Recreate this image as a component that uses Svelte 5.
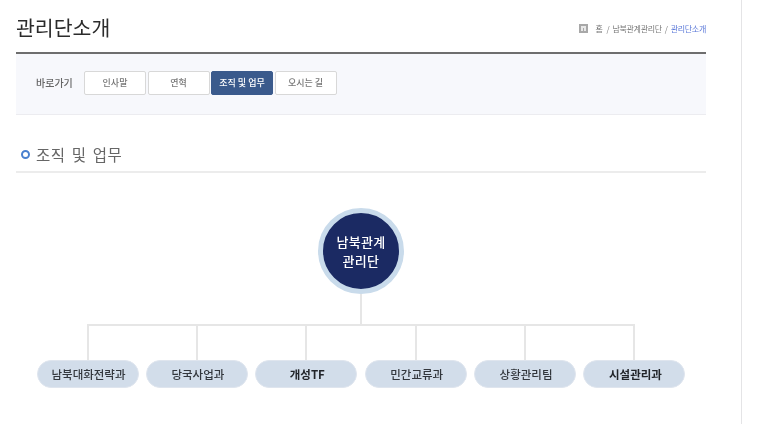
<script>
    const links = ["인사말", "연혁", "조직 및 업무", "오시는 길"];
    const teams = [
        { name: "남북대화전략과" },
        { name: "당국사업과" },
        { name: "개성TF", strong: true },
        { name: "민간교류과" },
        { name: "상황관리팀" },
        { name: "시설관리과", strong: true }
    ];
</script>

<div class="page">
    <main class="content">
        <header class="top">
            <h1>관리단소개</h1>
            <nav class="crumbs">
                <svg class="home" width="9" height="9" viewBox="0 0 9 9">
                    <rect width="9" height="9" fill="#a8a8a8" />
                    <rect x="2" y="2" width="5" height="5" fill="#e8e8e8" />
                    <rect x="4" y="4" width="1" height="3" fill="#a8a8a8" />
                </svg>
                <span class="crumb-home">홈</span>
                <span>/</span>
                <span>남북관계관리단</span>
                <span>/</span>
                <span class="here">관리단소개</span>
            </nav>
        </header>

        <div class="shortcuts">
            <span class="shortcuts-label">바로가기</span>
            <div class="tabs">
                {#each links as link, i}
                    <button class="tab" class:active={i === 2}>{link}</button>
                {/each}
            </div>
        </div>

        <h2 class="section"><span class="dot"></span>조직 및 업무</h2>

        <div class="chart">
            <div class="root"><span>남북관계<br />관리단</span></div>
            <div class="root-stem"></div>
            <div class="bar"></div>
            <div class="teams">
                {#each teams as team}
                    <div class="team">
                        <div class="stem"></div>
                        <div class="pill" class:strong={team.strong}>{team.name}</div>
                    </div>
                {/each}
            </div>
        </div>
    </main>
    <div class="edge"></div>
</div>

<style>
    :global(body) {
        margin: 0;
        background: #fff;
    }

    .page {
        display: flex;
        width: 768px;
        height: 424px;
        overflow: hidden;
        font-family: "Noto Sans CJK KR", "Noto Sans", sans-serif;
        filter: blur(0.3px);
    }

    .content {
        width: 690px;
        margin-left: 16px;
        flex: none;
    }

    .edge {
        width: 1px;
        margin-left: 35px;
        background: #e4e4e6;
        flex: none;
    }

    .top {
        display: flex;
        justify-content: space-between;
        align-items: center;
        height: 52px;
        border-bottom: 2px solid #6e6e6e;
    }

    h1 {
        margin: 2px 0 0;
        font-size: 20.5px;
        font-weight: 400;
        line-height: 28px;
        color: #2b2b2b;
    }

    .crumbs {
        display: flex;
        align-items: center;
        gap: 3px;
        margin-top: 4px;
        font-size: 8px;
        letter-spacing: -0.3px;
        color: #777;
    }

    .home { margin-right: 5px; }
    .crumb-home { margin-right: 1px; }
    .here { color: #5a78d8; }

    .shortcuts {
        display: flex;
        align-items: center;
        height: 61px;
        padding: 0 0 3px 20px;
        box-sizing: border-box;
        background: #f7f8fc;
        border-bottom: 1px solid #ececf0;
    }

    .shortcuts-label {
        width: 48px;
        font-size: 10px;
        font-weight: 500;
        color: #666;
    }

    .tabs {
        display: flex;
        gap: 1.5px;
    }

    .tab {
        width: 62px;
        height: 24px;
        padding: 0;
        background: #fff;
        border: 1px solid #d8d8d8;
        border-radius: 2px;
        font-family: inherit;
        font-size: 9px;
        font-weight: 500;
        color: #777;
    }

    .tab.active {
        background: #3a5a8c;
        border-color: #3a5a8c;
        color: #fff;
    }

    .section {
        display: flex;
        align-items: center;
        height: 58px;
        margin: 0;
        padding: 21px 0 0 5px;
        box-sizing: border-box;
        border-bottom: 2px solid #ececec;
        font-size: 15.5px;
        font-weight: 400;
        letter-spacing: 0.6px;
        word-spacing: 2px;
        color: #666;
    }

    .dot {
        width: 5px;
        height: 5px;
        margin: 1px 6px 0 0;
        border: 2px solid #4a80cf;
        border-radius: 50%;
    }

    .chart {
        display: flex;
        flex-direction: column;
        align-items: flex-start;
        padding-top: 35px;
    }

    .root {
        display: flex;
        align-items: center;
        justify-content: center;
        width: 76px;
        height: 76px;
        margin-left: 302px;
        background: #1b2a63;
        border: 5px solid #c9dbeb;
        border-radius: 50%;
        color: #fff;
        font-size: 13px;
        font-weight: 500;
        letter-spacing: 0.3px;
        line-height: 19px;
        text-align: center;
    }

    .root-stem {
        width: 2px;
        height: 30px;
        margin-left: 344px;
        background: #e6e6e6;
    }

    .bar {
        width: 548px;
        height: 2px;
        margin-left: 71px;
        background: #e6e6e6;
    }

    .teams {
        display: flex;
        gap: 7.4px;
        margin-left: 20.5px;
    }

    .team {
        display: flex;
        flex-direction: column;
        align-items: center;
        width: 102px;
    }

    .stem {
        width: 2px;
        height: 34px;
        background: #e6e6e6;
    }

    .pill {
        width: 100%;
        height: 28px;
        padding-left: 2px;
        box-sizing: border-box;
        background: #d2ddea;
        border: 1px solid #dfe5ee;
        border-radius: 14px;
        font-size: 11.5px;
        font-weight: 500;
        line-height: 26px;
        text-align: center;
        color: #33373d;
    }

    .pill.strong {
        font-weight: 700;
        color: #22252a;
    }
</style>
